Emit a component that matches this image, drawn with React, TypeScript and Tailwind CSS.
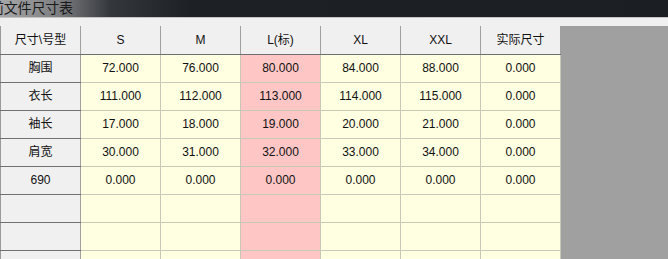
const columns = ["S", "M", "L(标)", "XL", "XXL", "实际尺寸"];

const rows: { name: string; values: string[] }[] = [
  { name: "胸围", values: ["72.000", "76.000", "80.000", "84.000", "88.000", "0.000"] },
  { name: "衣长", values: ["111.000", "112.000", "113.000", "114.000", "115.000", "0.000"] },
  { name: "袖长", values: ["17.000", "18.000", "19.000", "20.000", "21.000", "0.000"] },
  { name: "肩宽", values: ["30.000", "31.000", "32.000", "33.000", "34.000", "0.000"] },
  { name: "690", values: ["0.000", "0.000", "0.000", "0.000", "0.000", "0.000"] },
  { name: "", values: ["", "", "", "", "", ""] },
  { name: "", values: ["", "", "", "", "", ""] },
  { name: "", values: ["", "", "", "", "", ""] },
];

const font = "font-['Segoe_UI','Liberation_Sans','Noto_Sans_CJK_SC',sans-serif]";

const App = () => {
  return (
    <main className={`w-[668px] h-[259px] overflow-hidden flex flex-col bg-[#a0a0a0] text-[12px] text-[#111] ${font}`}>
      {/* window title */}
      <div className="h-[17px] shrink-0 overflow-hidden bg-[linear-gradient(90deg,#a8a8aa_0px,#7c7d80_60px,#34373c_110px,#1d2025_190px,#1b1e23_100%)]">
        <span className="block -ml-[10px] -mt-[3px] text-[14px] leading-[20px] tracking-[-0.2px] text-[#1a1a1a] font-['Noto_Sans_CJK_SC',sans-serif]">
          前文件尺寸表
        </span>
      </div>
      <div className="h-px shrink-0 bg-[#c4c4c4]" />
      <div className="h-[8px] shrink-0 bg-[#f0f0f0]" />

      <div className="flex">
        <table className="border-collapse border-l border-[#9a9a9a] table-fixed">
          <thead>
            <tr>
              <th className="w-[80px] h-[28px] p-0 font-normal bg-[#f0f0f0] border-r border-b border-r-[#a0a0a0] border-b-[#6e6e6e]">
                尺寸\号型
              </th>
              {columns.map((c) => (
                <th
                  key={c}
                  className="w-[80px] h-[28px] p-0 font-normal bg-[#f0f0f0] border-r border-b border-r-[#a0a0a0] border-b-[#6e6e6e]"
                >
                  {c}
                </th>
              ))}
            </tr>
          </thead>
          <tbody>
            {rows.map((r, i) => (
              <tr key={i}>
                <td className="h-[28px] p-0 text-center bg-[#f0f0f0] border-r border-b border-r-[#a0a0a0] border-b-[#707070]">
                  {r.name}
                </td>
                {r.values.map((v, j) => (
                  <td
                    key={j}
                    className={`h-[28px] p-0 text-center border-r border-b border-[#c8c8b8] ${
                      j === 2 ? "bg-[#ffc6c6]" : "bg-[#ffffe1]"
                    }`}
                  >
                    {v}
                  </td>
                ))}
              </tr>
            ))}
          </tbody>
        </table>
        <div className="flex-1 bg-[#a0a0a0]" />
      </div>
    </main>
  );
};

export default App;
